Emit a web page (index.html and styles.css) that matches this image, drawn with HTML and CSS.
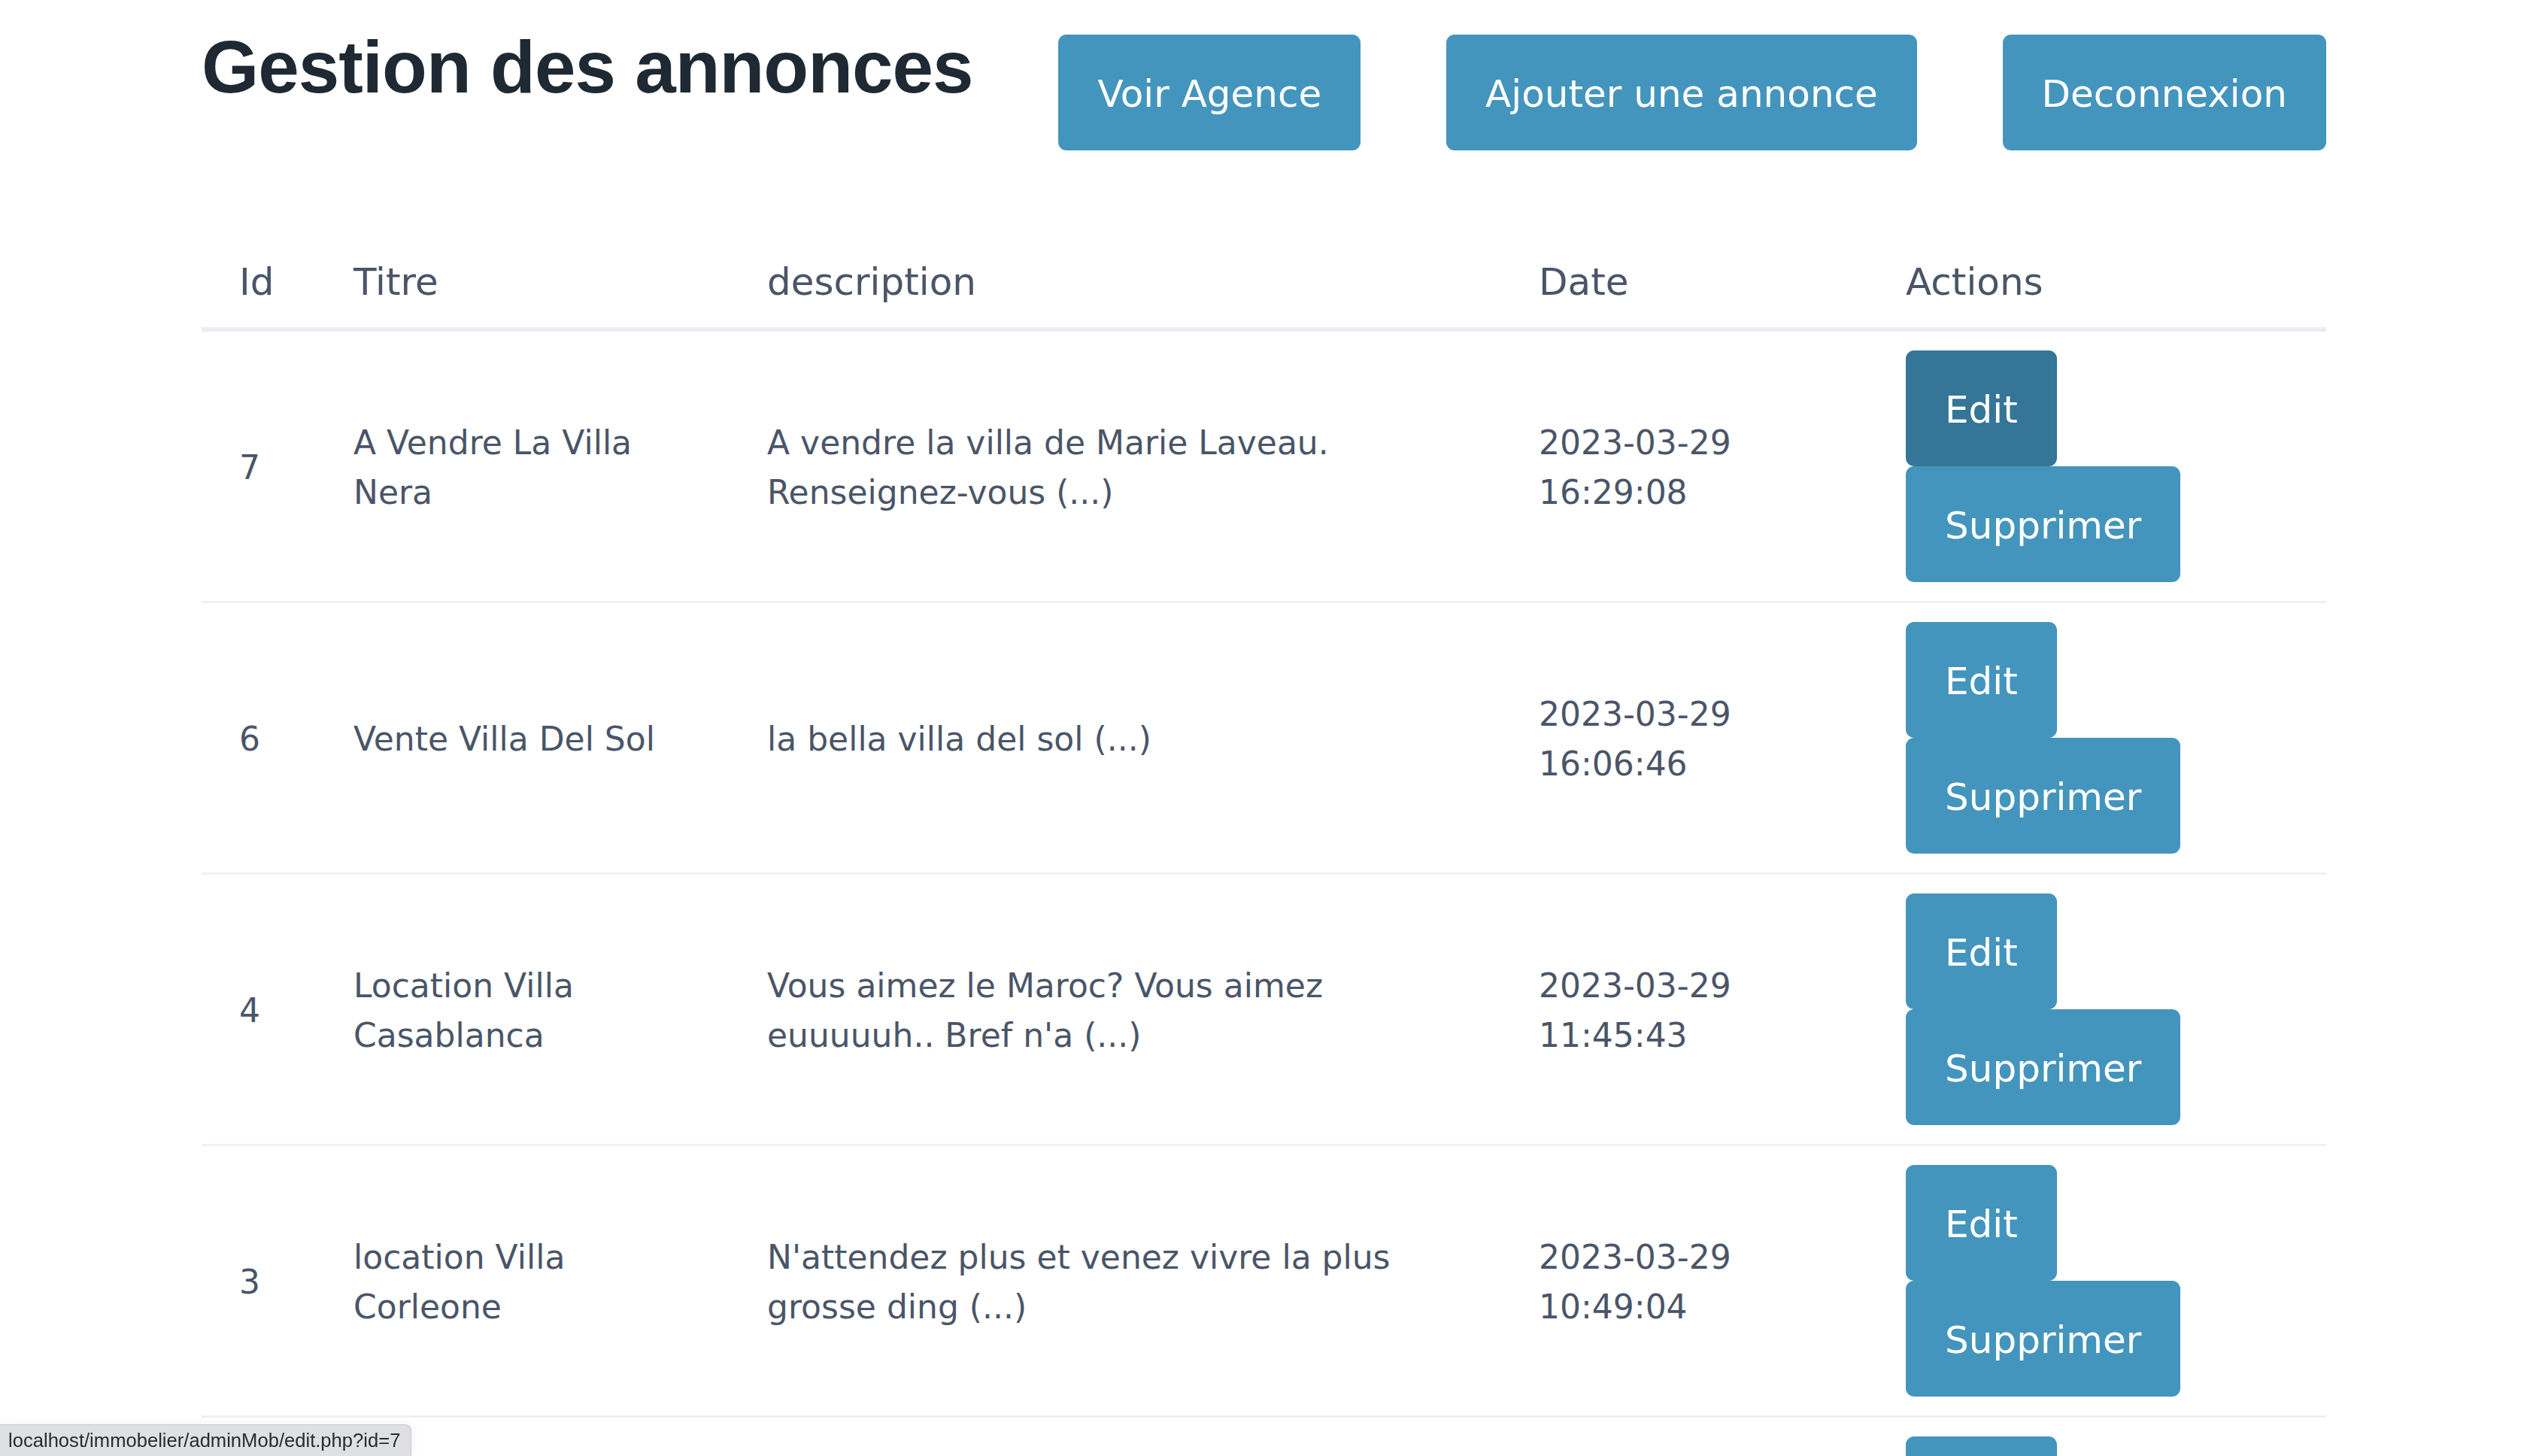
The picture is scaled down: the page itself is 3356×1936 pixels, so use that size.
FILE: index.html
```html
<!DOCTYPE html>
<html lang="fr">
<head>
<meta charset="utf-8">
<title>Gestion des annonces</title>
<link rel="stylesheet" href="styles.css">
</head>
<body>
<div class="container">
  <header class="topbar">
    <h1 class="title">Gestion des annonces</h1>
    <a class="btn btn-top" href="#">Voir Agence</a>
    <a class="btn btn-top" href="#">Ajouter une annonce</a>
    <a class="btn btn-top" href="#">Deconnexion</a>
  </header>

  <table class="list">
    <colgroup>
      <col class="c-id">
      <col class="c-titre">
      <col class="c-desc">
      <col class="c-date">
      <col class="c-actions">
    </colgroup>
    <thead>
      <tr>
        <th>Id</th>
        <th>Titre</th>
        <th>description</th>
        <th>Date</th>
        <th>Actions</th>
      </tr>
    </thead>
    <tbody>
      <tr>
        <td>7</td>
        <td>A Vendre La Villa Nera</td>
        <td>A vendre la villa de Marie Laveau. Renseignez-vous (...)</td>
        <td>2023-03-29 16:29:08</td>
        <td class="cell-actions"><div class="actions"><a class="btn btn-active" href="#">Edit</a><a class="btn" href="#">Supprimer</a></div></td>
      </tr>
      <tr>
        <td>6</td>
        <td>Vente Villa Del Sol</td>
        <td>la bella villa del sol (...)</td>
        <td>2023-03-29 16:06:46</td>
        <td class="cell-actions"><div class="actions"><a class="btn" href="#">Edit</a><a class="btn" href="#">Supprimer</a></div></td>
      </tr>
      <tr>
        <td>4</td>
        <td>Location Villa Casablanca</td>
        <td>Vous aimez le Maroc? Vous aimez euuuuuh.. Bref n'a (...)</td>
        <td>2023-03-29 11:45:43</td>
        <td class="cell-actions"><div class="actions"><a class="btn" href="#">Edit</a><a class="btn" href="#">Supprimer</a></div></td>
      </tr>
      <tr>
        <td>3</td>
        <td>location Villa Corleone</td>
        <td>N'attendez plus et venez vivre la plus grosse ding (...)</td>
        <td>2023-03-29 10:49:04</td>
        <td class="cell-actions"><div class="actions"><a class="btn" href="#">Edit</a><a class="btn" href="#">Supprimer</a></div></td>
      </tr>
      <tr>
        <td></td>
        <td></td>
        <td></td>
        <td></td>
        <td class="cell-actions"><div class="actions"><a class="btn" href="#">Edit</a><a class="btn" href="#">Supprimer</a></div></td>
      </tr>
    </tbody>
  </table>
</div>

<div class="statusbar">localhost/immobelier/adminMob/edit.php?id=7</div>
</body>
</html>
```

FILE: styles.css
```css
html, body {
  margin: 0;
  padding: 0;
  background: #ffffff;
}

body {
  font-family: "DejaVu Sans", Verdana, sans-serif;
  color: #4a5568;
}

.container {
  width: 2825px;
  margin: 0 0 0 268px;
}

.topbar {
  display: flex;
  justify-content: space-between;
  align-items: flex-start;
}

.title {
  margin: 34px 0 0 0;
  font-family: "Liberation Sans", Arial, sans-serif;
  font-weight: 700;
  font-size: 98px;
  line-height: 110px;
  letter-spacing: -1px;
  color: #1f2933;
}

.btn {
  display: inline-block;
  box-sizing: border-box;
  padding: 42px 52px 37px 52px;
  font-family: "DejaVu Sans", Verdana, sans-serif;
  font-size: 50px;
  line-height: 75px;
  color: #ffffff;
  background: #4495bd;
  border-radius: 11px;
  text-decoration: none;
  white-space: nowrap;
}

.btn-top {
  margin-top: 46px;
}

.btn-active {
  background: #357597;
}

.list {
  width: 2825px;
  margin-top: 116px;
  border-collapse: collapse;
  table-layout: fixed;
}

.c-id { width: 152px; }
.c-titre { width: 550px; }
.c-desc { width: 1026px; }
.c-date { width: 488px; }
.c-actions { width: 609px; }

.list th {
  text-align: left;
  font-weight: 400;
  font-size: 50px;
  line-height: 75px;
  padding: 22px 50px 22px 50px;
  border-bottom: 6px solid #e9edf1;
  color: #4a5568;
}

.list td {
  font-size: 44px;
  line-height: 66px;
  padding: 27px 50px 23px 50px;
  vertical-align: middle;
  border-bottom: 3px solid #eef1f4;
  color: #4a5568;
}

.list td.cell-actions {
  padding: 25px 50px;
}

.actions {
  display: flex;
  flex-direction: column;
  align-items: flex-start;
}

.statusbar {
  position: fixed;
  left: 0;
  bottom: 0;
  height: 41px;
  padding: 0 14px 0 11px;
  background: #dfe0e4;
  border-top: 1px solid #c6c7cb;
  border-right: 1px solid #c6c7cb;
  border-top-right-radius: 8px;
  font-family: "Liberation Sans", Arial, sans-serif;
  font-size: 25.6px;
  line-height: 41px;
  color: #2b2b2b;
  box-shadow: 0 0 14px rgba(0, 0, 0, 0.06);
}
```
